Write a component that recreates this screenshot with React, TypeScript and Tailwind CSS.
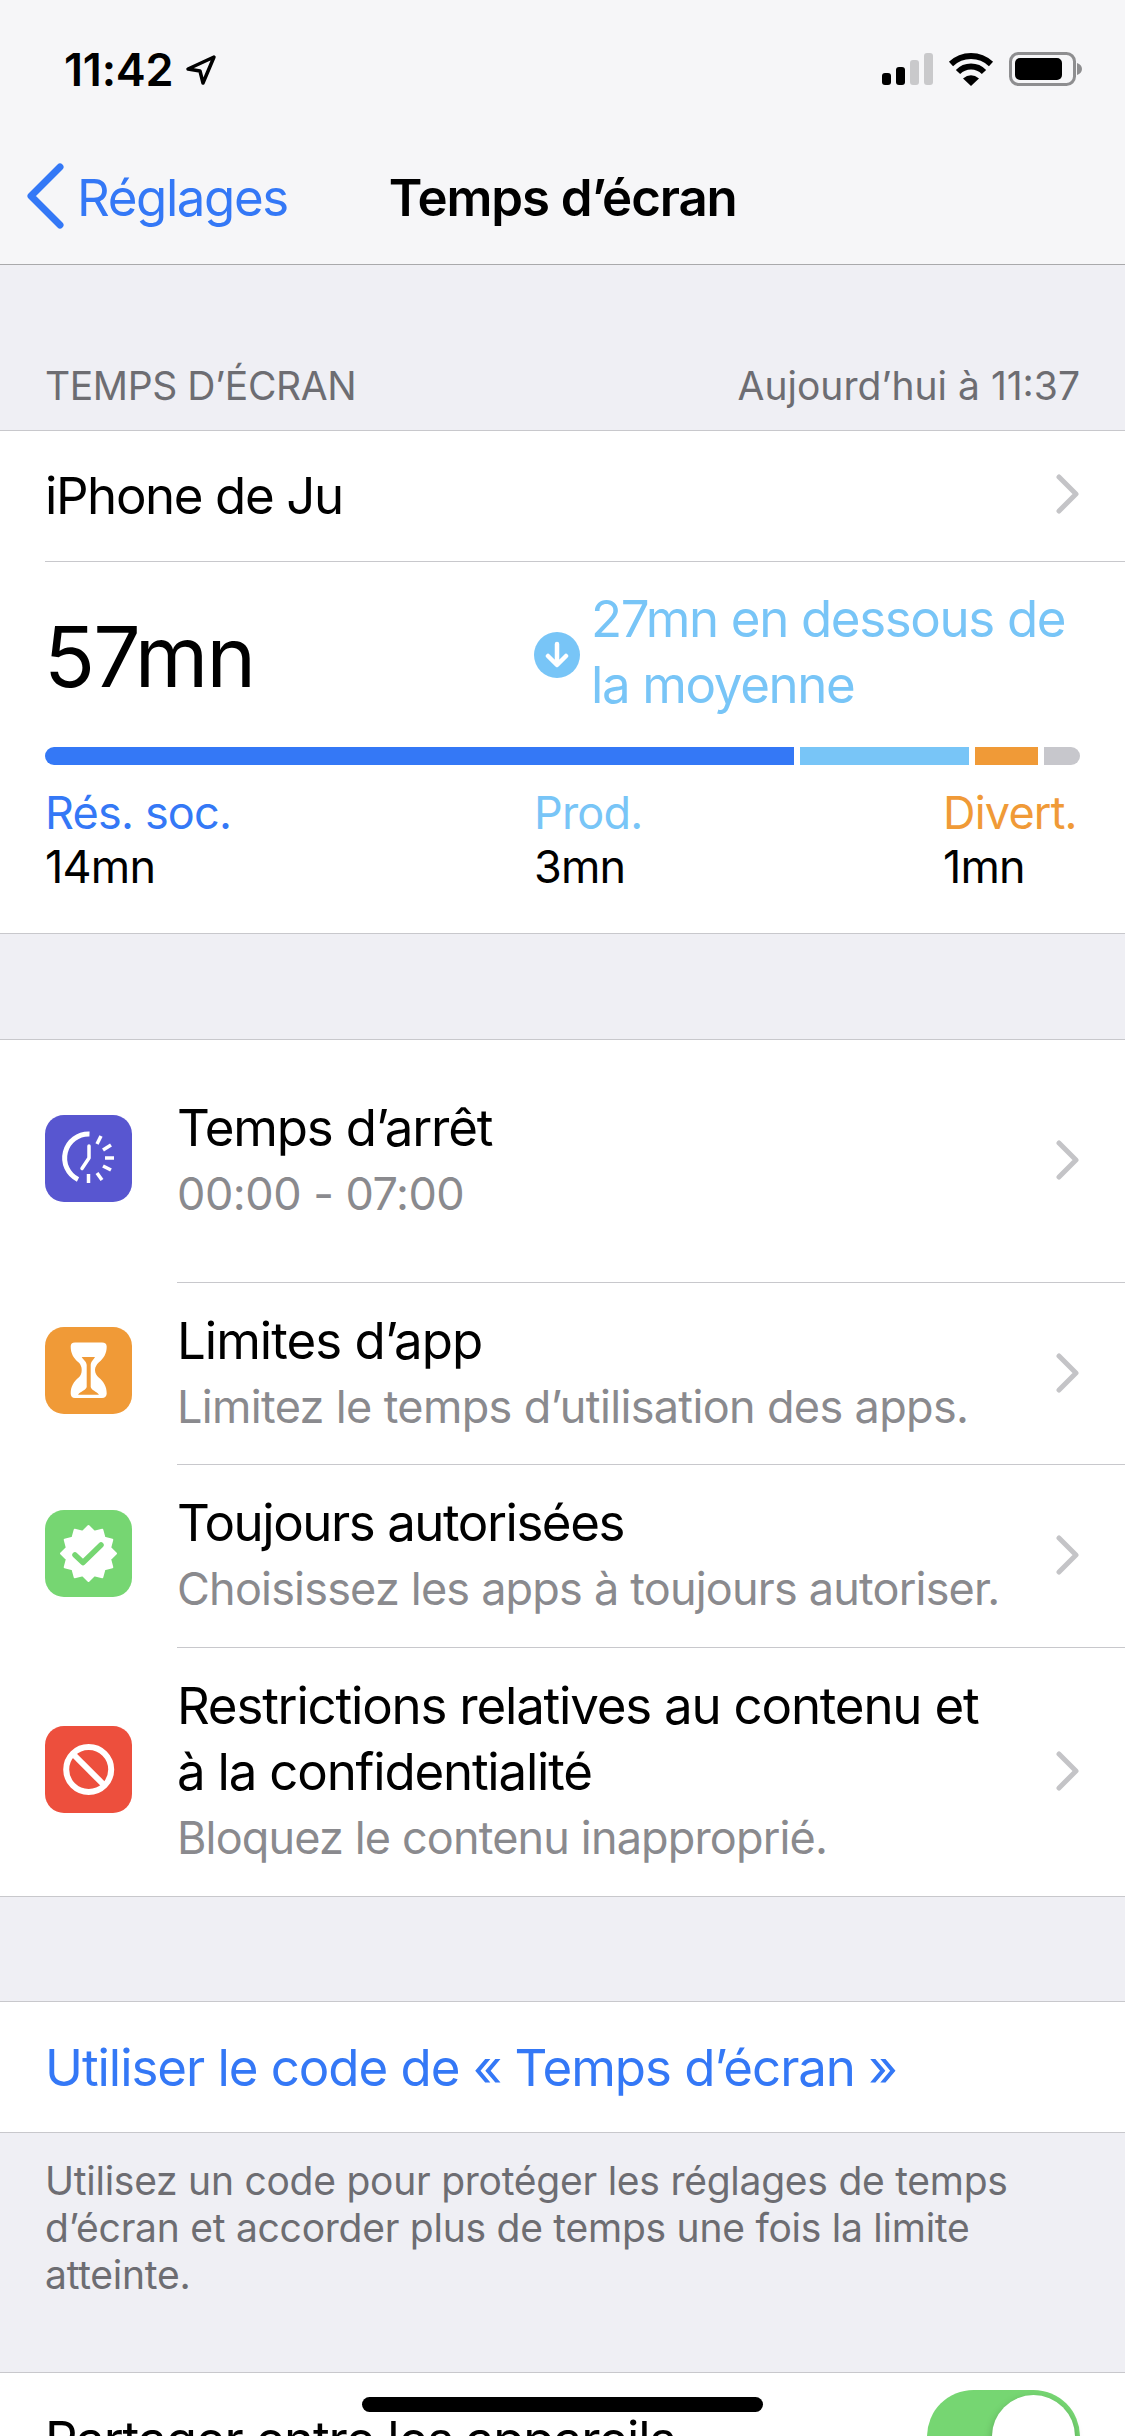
import React from 'react';

const Chevron = () => (
  <svg width="24" height="40" viewBox="0 0 24 40" fill="none" className="shrink-0">
    <path d="M3 3l17 17L3 37" stroke="#c4c4c7" strokeWidth="5" strokeLinecap="round" strokeLinejoin="round" />
  </svg>
);

const DowntimeIcon = () => (
  <svg viewBox="0 0 87 87" className="w-full h-full" fill="none" stroke="#fff">
    <path d="M44.500 19A24 24 0 0 0 33 64.500" strokeWidth="5" />
    <path d="M44 31v12L37 53.500" strokeWidth="3.500" strokeLinecap="round" strokeLinejoin="round" />
    <g strokeWidth="3.500">
      <path d="M56 21l-4 8" />
      <path d="M66 30l-8 5" />
      <path d="M69 43h-9" />
      <path d="M66 55l-8-4" />
      <path d="M57 65l-5-7" />
      <path d="M43.500 68v-9" />
    </g>
  </svg>
);

const HourglassIcon = () => (
  <svg viewBox="0 0 87 87" className="w-full h-full">
    <path
      d="M30 15.500h27c3 0 4.700 1.500 4.700 4 0 7-3 12-8 16-2 2-3.700 4.500-3.700 7.500s1.700 5.500 3.700 7.500c5 4 8 9 8 16 0 2.500-1.700 4.500-4.700 4.500H30c-3 0-4.300-2-4.300-4.500 0-7 3-12 8-16 2-2 3-4.500 3-7.500s-1-5.500-3-7.500c-5-4-8-9-8-16 0-2.500 1.300-4 4.300-4z"
      fill="#fff"
    />
    <path d="M36.700 30H50c-1.500 3-4 4-4.300 8v22c.5 3 6 4.500 8.300 7.700H33c2.300-3.200 8.200-4.700 8.700-7.700V38c-.3-4-3.500-5-5-8z" fill="#f09a37" />
  </svg>
);

// 12 point seal: tips every 30 degrees, valleys between them
const sealPoints = Array.from({ length: 24 })
  .map((_, i) => {
    const r = i % 2 === 0 ? 27.5 : 22.5;
    const a = (i * 15 * Math.PI) / 180;
    return `${(43.5 + r * Math.sin(a)).toFixed(1)},${(43.5 - r * Math.cos(a)).toFixed(1)}`;
  })
  .join(' ');

const BadgeIcon = () => (
  <svg viewBox="0 0 87 87" className="w-full h-full">
    <polygon points={sealPoints} fill="#fff" stroke="#fff" strokeWidth="2" strokeLinejoin="round" />
    <path d="M30 45l8 7.500L56 35" fill="none" stroke="#76d672" strokeWidth="5.500" strokeLinecap="round" strokeLinejoin="round" />
  </svg>
);

const BlockedIcon = () => (
  <svg viewBox="0 0 87 87" className="w-full h-full" fill="none" stroke="#fff" strokeWidth="6">
    <circle cx="43.700" cy="43.500" r="22.500" />
    <path d="M28 28l31 31" />
  </svg>
);

const Divider = () => <div className="h-[1px] bg-[#c8c8cc]" />;

interface RowProps {
  icon: React.ReactNode;
  color: string;
  title: string[];
  subtitle: string;
  height: string;
  titleClass?: string;
  subClass?: string;
}

const Row: React.FC<RowProps> = ({ icon, color, title, subtitle, height, titleClass = 'tracking-[-1.2px]', subClass = 'tracking-[-0.75px]' }) => (
  <div className={`flex items-center ${height}`}>
    <div className={`w-[87px] h-[87px] ml-[45px] mb-[6px] rounded-[19px] shrink-0 ${color}`}>{icon}</div>
    <div className="ml-[45px] flex-1 text-[51px] leading-[66px] text-black">
      {title.map((t) => (
        <div key={t} className={titleClass}>
          {t}
        </div>
      ))}
      <div className={`text-[45px] text-[#8a8a8e] ${subClass}`}>{subtitle}</div>
    </div>
    <div className="mr-[45px] mb-[2px]">
      <Chevron />
    </div>
  </div>
);

const App: React.FC = () => {
  return (
    <div className="w-[1125px] h-[2436px] overflow-hidden relative bg-[#efeff4] font-['Inter','Liberation_Sans',sans-serif]">
      {/* Status + nav */}
      <div className="h-[265px] bg-[#f6f6f8] border-b border-[#a9a9ab]">
        <div className="h-[132px] flex justify-between items-start">
          <div className="flex items-center ml-[64px] mt-[42px] h-[56px] gap-[12px]">
            <span className="text-[45px] font-semibold leading-[56px] tracking-[-0.2px] text-black">11:42</span>
            <svg width="32" height="32" viewBox="0 0 32 32" fill="none">
              <path d="M29 3L3 15l12 2 3 12z" stroke="#000" strokeWidth="3.500" strokeLinejoin="round" />
            </svg>
          </div>
          <svg width="201" height="36" viewBox="0 0 201 36" className="mt-[51px] mr-[42px]">
            <rect x="0" y="22" width="9" height="12" rx="3" fill="#000" />
            <rect x="14" y="16" width="9" height="18" rx="3" fill="#000" />
            <rect x="28" y="9" width="9" height="25" rx="3" fill="#c9c9cb" />
            <rect x="42" y="2" width="9" height="32" rx="3" fill="#c9c9cb" />
            <path d="M69 13A29 29 0 0 1 109 13" fill="none" stroke="#000" strokeWidth="6" />
            <path d="M76 21A18 18 0 0 1 102 21" fill="none" stroke="#000" strokeWidth="6" />
            <path d="M81 27.500Q89 21 97 27.500L89 35z" fill="#000" />
            <rect x="128.500" y="2.500" width="64" height="31" rx="8" fill="none" stroke="#8e8e90" strokeWidth="3" />
            <rect x="133" y="7" width="47" height="22" rx="5" fill="#000" />
            <path d="M195 12c3 1 5 3 5 6s-2 5-5 6z" fill="#8e8e90" />
          </svg>
        </div>
        <div className="flex items-center h-[132px]">
          <svg width="38" height="66" viewBox="0 0 38 66" fill="none" className="ml-[26px] mb-[4px]">
            <path d="M34 4L5 33l29 29" stroke="#3478f6" strokeWidth="7" strokeLinecap="round" strokeLinejoin="round" />
          </svg>
          <span className="ml-[13px] text-[51px] tracking-[-1.4px] text-[#3478f6]">Réglages</span>
          <span className="ml-[101px] text-[51px] font-semibold tracking-[-1.1px] text-black">Temps d’écran</span>
        </div>
      </div>

      {/* Section header */}
      <div className="h-[165px] flex items-end justify-between px-[45px] pb-[20px] text-[39px] leading-[48px] text-[#6d6d72]">
        <span className="tracking-[-0.4px]">TEMPS D’ÉCRAN</span>
        <span className="tracking-[0px]">Aujourd’hui à 11:37</span>
      </div>

      {/* Usage card */}
      <Divider />
      <div className="bg-white">
        <div className="h-[130px] flex items-center justify-between pl-[45px] pr-[45px] text-[51px] tracking-[-1.4px] text-black">
          <span>iPhone de Ju</span>
          <div className="mb-[4px]">
            <Chevron />
          </div>
        </div>
        <div className="ml-[45px]">
          <Divider />
        </div>
        <div className="flex items-center h-[185px] pl-[44px]">
          <div className="w-[490px] mt-[5px] text-[84px] leading-[100px] tracking-[-1.8px] text-black">57mn</div>
          <div className="w-[46px] h-[46px] rounded-full bg-[#78c5f7] flex items-center justify-center shrink-0">
            <svg width="24" height="28" viewBox="0 0 24 28" fill="none">
              <path d="M12 3v20M3 15l9 9 9-9" stroke="#fff" strokeWidth="4.500" strokeLinecap="round" strokeLinejoin="round" />
            </svg>
          </div>
          <div className="ml-[11px] mb-[5px] text-[51px] leading-[66px] tracking-[-1.35px] text-[#78c5f7]">
            27mn en dessous de
            <br />
            la moyenne
          </div>
        </div>
        <div className="mx-[45px] h-[18px] flex gap-[6px] rounded-[9px] overflow-hidden">
          <div className="w-[749px] bg-[#3478f6]" />
          <div className="w-[169px] bg-[#78c5f7]" />
          <div className="w-[63px] bg-[#f09a37]" />
          <div className="flex-1 bg-[#c7c7cc]" />
        </div>
        <div className="flex pl-[45px] pt-[21px] h-[168px] text-[45px] leading-[54px] tracking-[-0.8px] text-black">
          <div className="w-[489px]">
            <div className="text-[#3478f6]">Rés. soc.</div>
            <div>14mn</div>
          </div>
          <div className="w-[409px]">
            <div className="text-[#78c5f7]">Prod.</div>
            <div>3mn</div>
          </div>
          <div>
            <div className="text-[#f09a37]">Divert.</div>
            <div>1mn</div>
          </div>
        </div>
      </div>
      <Divider />

      <div className="h-[105px]" />

      {/* Feature rows */}
      <Divider />
      <div className="bg-white">
        <Row icon={<DowntimeIcon />} color="bg-[#5856d0]" title={['Temps d’arrêt']} subtitle="00:00 - 07:00" height="h-[242px]" subClass="tracking-[-0.5px]" />
        <div className="ml-[177px]">
          <Divider />
        </div>
        <Row icon={<HourglassIcon />} color="bg-[#f09a37]" title={['Limites d’app']} subtitle="Limitez le temps d’utilisation des apps." height="h-[181px]" titleClass="tracking-[-1px]" subClass="tracking-[-0.65px]" />
        <div className="ml-[177px]">
          <Divider />
        </div>
        <Row icon={<BadgeIcon />} color="bg-[#76d672]" title={['Toujours autorisées']} subtitle="Choisissez les apps à toujours autoriser." height="h-[182px]" titleClass="tracking-[-1.45px]" subClass="tracking-[-0.8px]" />
        <div className="ml-[177px]">
          <Divider />
        </div>
        <Row
          icon={<BlockedIcon />}
          color="bg-[#ed4f3d]"
          title={['Restrictions relatives au contenu et', 'à la confidentialité']}
          subtitle="Bloquez le contenu inapproprié."
          height="h-[248px]"
          subClass="tracking-[-0.85px]"
        />
      </div>
      <Divider />

      <div className="h-[104px]" />

      {/* Passcode */}
      <Divider />
      <div className="bg-white h-[130px] flex items-center pl-[45px] pt-[2px] text-[51px] tracking-[-1.05px] text-[#3478f6]">
        Utiliser le code de « Temps d’écran »
      </div>
      <Divider />
      <div className="px-[45px] pt-[24px] h-[239px] text-[39px] leading-[47px] tracking-[-0.25px] text-[#6d6d72]">
        Utilisez un code pour protéger les réglages de temps
        <br />
        d’écran et accorder plus de temps une fois la limite
        <br />
        atteinte.
      </div>

      {/* Share row, cut by the window */}
      <Divider />
      <div className="bg-white h-[130px] flex items-start justify-between pl-[45px] pr-[45px]">
        <span className="mt-[34px] text-[51px] leading-[66px] tracking-[-1.2px] text-black">Partager entre les appareils</span>
        <div className="mt-[17px] w-[153px] h-[93px] rounded-full bg-[#76d672] p-[5px] flex justify-end">
          <div className="w-[83px] h-[83px] rounded-full bg-white shadow-[0_4px_8px_rgba(0,0,0,0.25)]" />
        </div>
      </div>

      {/* Home indicator */}
      <div className="absolute left-[362px] top-[2397px] w-[401px] h-[15px] rounded-full bg-black" />
    </div>
  );
};

export default App;
